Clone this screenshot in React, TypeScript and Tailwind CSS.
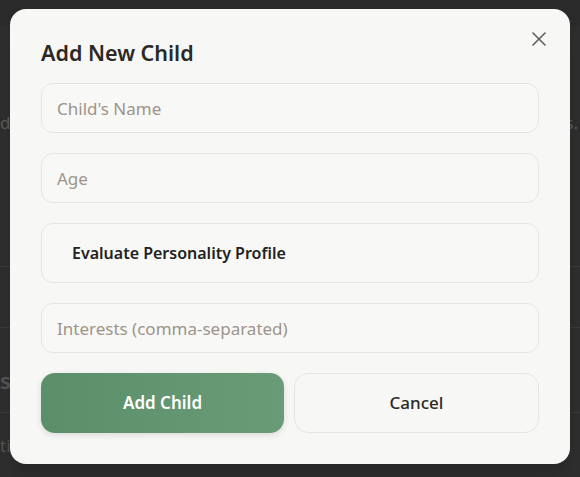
import React from "react";

const inputCls =
  "h-[50px] w-full rounded-[12px] border border-[#e8e5e0] bg-[#f8f8f6] px-[15px] text-[17px] text-[#2b2826] placeholder-[#9d948b] outline-none";

export default function App() {
  const font = { fontFamily: '"Noto Sans", "Open Sans", sans-serif' };
  return (
    <div className="relative w-[580px] h-[477px] overflow-hidden bg-[#2e2e2e]" style={font}>
      {/* underlying page, dimmed */}
      <div className="flex flex-col text-[#5c5c5c]">
        <div className="h-[26px] bg-[#2a2a2a]" />
        <div className="flex h-[241px] justify-between border-b border-[#3a3a3a] pt-[84px] pr-[2px] text-[17px]">
          <span>de</span>
          <span>s.</span>
        </div>
        <div className="h-[61px] border-b border-[#3a3a3a]" />
        <div className="h-[85px] border-b border-[#3a3a3a] pt-[36px] text-[22px] font-semibold text-[#555]">s</div>
        <div className="pt-[20px] text-[17px] text-[#555]">ti</div>
      </div>

      {/* modal overlay */}
      <div className="absolute inset-0 flex justify-center pt-[9px]">
        <div className="relative h-fit w-[560px] rounded-[16px] bg-[#f7f7f5] p-[31px] shadow-xl">
          <button className="absolute right-[19px] top-[18px] flex h-[24px] w-[24px] items-center justify-center text-[#5f5f5f]">
            <svg width="24" height="24" viewBox="0 0 24 24" fill="none" stroke="currentColor" strokeWidth="1.6" strokeLinecap="round">
              <path d="M18 6 6 18" />
              <path d="m6 6 12 12" />
            </svg>
          </button>
          <h2 className="mt-[-3px] mb-[14px] text-[21.5px] leading-[32px] font-semibold text-[#2b2826]">
            Add New Child
          </h2>
          <div className="flex flex-col gap-5">
            <input className={inputCls} placeholder="Child's Name" />
            <input className={inputCls} placeholder="Age" />
            <button className="h-[60px] w-full rounded-[12px] border border-[#e8e5e0] bg-[#f8f8f6] px-[30px] text-left text-[16px] font-semibold text-[#222]">
              Evaluate Personality Profile
            </button>
            <input className={inputCls} placeholder="Interests (comma-separated)" />
            <div className="flex gap-[10px]">
              <button className="h-[60px] flex-1 rounded-[14px] bg-gradient-to-r from-[#5a8f6a] to-[#6a9b77] text-[17px] font-semibold text-white shadow-[0_2px_6px_rgba(0,0,0,0.12)]">
                Add Child
              </button>
              <button className="h-[60px] flex-1 rounded-[14px] border border-[#e8e5e0] bg-[#f7f7f5] text-[17px] font-medium text-[#2b2826]">
                Cancel
              </button>
            </div>
          </div>
        </div>
      </div>
    </div>
  );
}
